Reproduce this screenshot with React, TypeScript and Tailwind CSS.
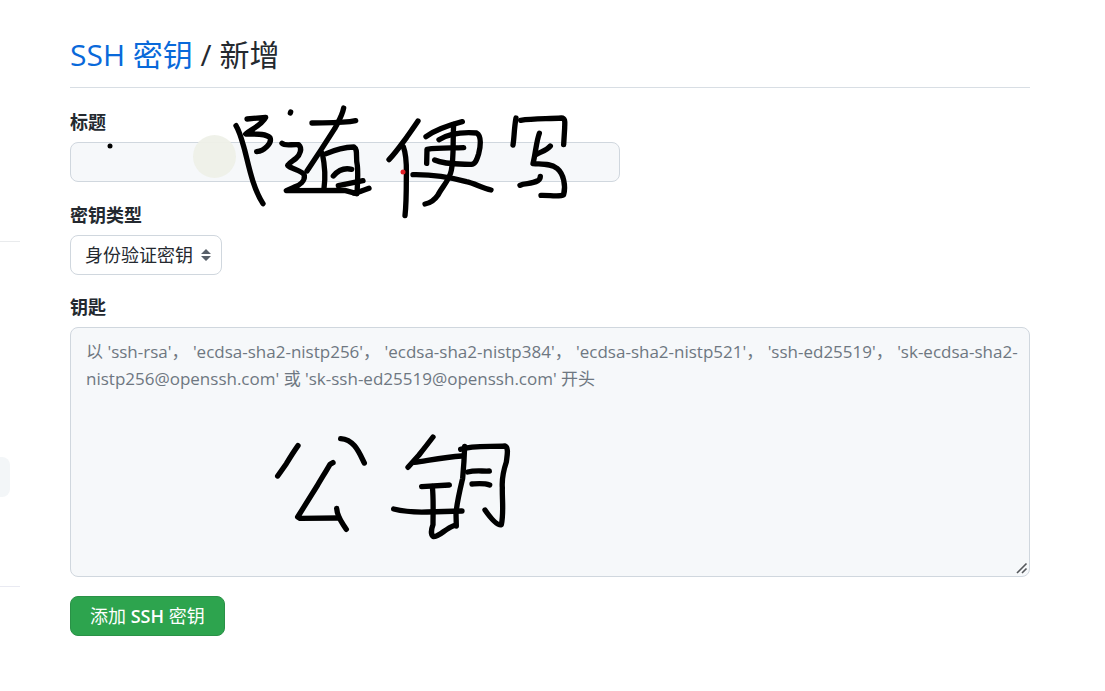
const placeholder =
  "以 'ssh-rsa'， 'ecdsa-sha2-nistp256'， 'ecdsa-sha2-nistp384'， 'ecdsa-sha2-nistp521'， 'ssh-ed25519'， 'sk-ecdsa-sha2-nistp256@openssh.com' 或 'sk-ssh-ed25519@openssh.com' 开头";

function Sidebar() {
  return (
    <aside className="w-5 shrink-0 pt-[241px]">
      <hr className="border-[#e9ebed]" />
      <div className="mt-[215px] h-10 w-[10px] rounded-r-lg bg-[#f3f6f8]" />
      <hr className="mt-[89px] border-[#e9eaf2]" />
    </aside>
  );
}

function Annotations() {
  return (
    <svg
      className="pointer-events-none absolute top-0 left-0"
      width="640"
      height="560"
      viewBox="0 0 640 560"
      fill="none"
      aria-hidden="true"
    >
      <circle cx="214.5" cy="156.5" r="21.5" fill="#eef0e8" fillOpacity="0.94" />
      <circle cx="110" cy="146" r="2.5" fill="#000" />
      <g stroke="#000" strokeWidth="16" strokeLinecap="round" strokeLinejoin="round">
        <g transform="translate(220 95) scale(0.33333)">
          <path d="M48 92C60 112 66 137 74 165C86 211 98 278 129 326" />
          <path d="M81 72L137 67C127 88 98 101 77 117C101 118 135 113 150 128C157 144 133 167 110 170" />
          <path d="M211 54L212 51" />
          <path d="M186 145C196 154 215 147 236 149C248 160 240 180 228 190C217 199 209 203 203 211C213 222 248 226 253 241C255 258 240 271 221 277L199 287L374 286L410 296" />
          <path d="M276 84C321 83 370 85 407 77" />
          <path d="M371 39C366 64 356 78 344 101L302 166L261 228" />
          <path d="M307 175C314 209 317 246 312 280" />
          <path d="M319 176C346 164 374 157 402 156C415 164 406 188 412 211C415 239 412 274 411 295" />
          <path d="M340 243C351 230 370 217 395 223" />
          <path d="M355 272L429 257" />
          <path d="M402 294C420 291 432 286 447 280" />
        </g>
        <g transform="translate(380 95) scale(0.33333)">
          <path d="M114 78C102 96 91 111 80 127C63 150 47 173 27 194" />
          <path d="M70 155C82 187 79 219 79 252C79 290 79 326 75 362" />
          <path d="M138 125C166 104 205 91 247 80" />
          <path d="M177 134C207 116 251 111 290 114C306 123 301 158 296 176C289 199 284 210 272 208C235 207 193 209 164 195" />
          <path d="M140 205L141 163C178 157 216 160 251 158" />
          <path d="M221 88C218 138 222 188 214 226C209 255 184 279 174 300C162 318 151 324 135 327" />
          <path d="M99 239C154 238 208 246 259 260C281 264 307 279 333 285" />
          <path d="M408 69C402 102 403 126 399 150" />
          <path d="M422 76C460 70 506 72 544 69C558 70 554 84 554 99L551 149" />
          <path d="M478 115C469 139 467 173 459 206C488 208 510 205 531 220C551 237 558 272 551 299C539 307 508 300 483 301" />
          <path d="M469 178C483 170 500 167 511 153" />
          <path d="M420 271C435 263 453 269 474 257C481 252 481 249 481 244" />
        </g>
        <g transform="translate(260 425) scale(0.33333)">
          <path d="M114 62C101 80 90 98 79 116L53 153" />
          <path d="M242 41C283 44 297 82 313 114" />
          <path d="M219 113L210 118C199 137 186 158 173 180L113 276L120 280L234 279" />
          <path d="M230 250C232 278 246 292 259 313" />
          <path d="M519 36C503 57 492 71 477 90L444 127" />
          <path d="M463 112C506 106 555 96 605 93" />
          <path d="M485 185L568 180" />
          <path d="M517 184C521 222 519 263 519 299C513 315 513 330 520 335C536 337 557 310 581 302" />
          <path d="M401 252C433 260 469 262 501 261L606 258" />
          <path d="M602 73C638 61 690 66 735 63C747 68 741 92 739 111C731 135 725 160 727 188C726 223 732 263 724 299C711 303 691 278 675 255" />
          <path d="M614 64C613 95 611 127 608 160C600 194 591 230 588 265L589 303" />
          <path d="M623 141C645 135 665 139 688 138" />
          <path d="M636 177C654 176 673 174 689 180" />
        </g>
      </g>
      <circle cx="403" cy="172" r="2.5" fill="#e01f26" />
    </svg>
  );
}

export default function App() {
  return (
    <div className="relative flex min-h-screen bg-white font-['Open_Sans','Noto_Sans_CJK_SC',sans-serif] text-[#24292f]">
      <Sidebar />
      <main className="mr-[75px] ml-[50px] min-w-0 flex-1 pt-8">
        <h1 className="border-b border-[#d8dee4] pb-[9px] text-[30px] leading-[46px] font-normal">
          <a href="#keys" className="text-[#0969da]">
            SSH 密钥
          </a>{" "}
          / 新增
        </h1>
        <form className="mt-[21px]" onSubmit={(e) => e.preventDefault()}>
          <div className="mb-5 flex flex-col items-start gap-[6px]">
            <label htmlFor="title" className="text-[18px] leading-[27px] font-bold">
              标题
            </label>
            <input
              id="title"
              type="text"
              className="h-10 w-full max-w-[550px] rounded-lg border border-[#d0d7de] bg-[#f6f8fa] px-[15px] text-[17px]"
            />
          </div>
          <div className="mb-[19px] flex flex-col items-start gap-[6px]">
            <label htmlFor="type" className="text-[18px] leading-[27px] font-bold">
              密钥类型
            </label>
            <div className="relative">
              <select
                id="type"
                className="h-10 w-[152px] appearance-none rounded-lg border border-[#d0d7de] bg-white pl-[14px] text-[18px]"
              >
                <option>身份验证密钥</option>
              </select>
              <svg
                className="pointer-events-none absolute top-[14px] right-[11px]"
                width="10"
                height="12"
                viewBox="0 0 10 12"
                fill="#586069"
                aria-hidden="true"
              >
                <path d="M5 0L10 5H0ZM5 12L0 7H10Z" />
              </svg>
            </div>
          </div>
          <div className="mb-[19px] flex flex-col items-start gap-[6px]">
            <label htmlFor="key" className="text-[18px] leading-[27px] font-bold">
              钥匙
            </label>
            <div className="relative w-full">
              <textarea
                id="key"
                placeholder={placeholder}
                className="block h-[250px] w-full resize-none rounded-lg border border-[#d0d7de] bg-[#f6f8fa] py-[10px] pr-2 pl-[15px] text-[17px] leading-[27px] placeholder:text-[#6e7781]"
              />
              <svg
                className="pointer-events-none absolute right-[2px] bottom-[3px]"
                width="12"
                height="12"
                viewBox="0 0 12 12"
                fill="none"
                stroke="#55585c"
                strokeWidth="1.6"
                aria-hidden="true"
              >
                <path d="M1 11L10.500 1.500M6 11L10.500 6.500" />
              </svg>
            </div>
          </div>
          <button
            type="submit"
            className="h-10 rounded-lg border border-[#2a9147] bg-[#2da44e] px-[19px] text-[18px] whitespace-nowrap text-white"
          >
            添加 <span className="font-semibold">SSH</span> 密钥
          </button>
        </form>
      </main>
      <Annotations />
    </div>
  );
}
